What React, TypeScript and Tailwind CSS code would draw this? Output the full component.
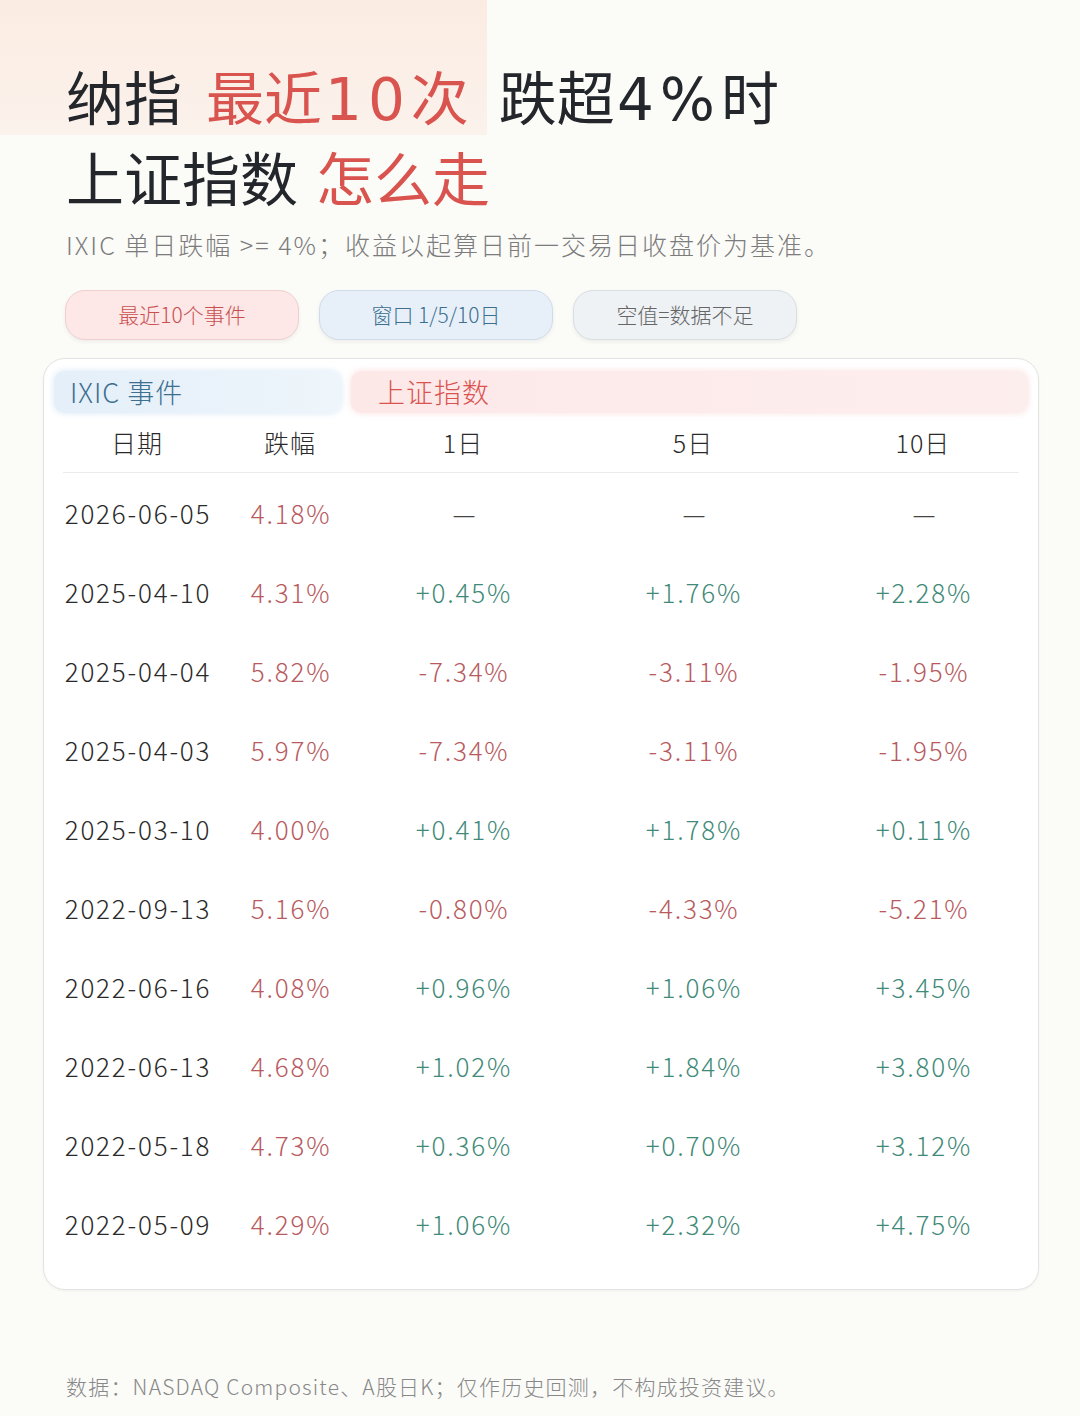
import React from "react";

type Row = { d: string; f: string; a: string; b: string; c: string };

const rows: Row[] = [
  { d: "2026-06-05", f: "4.18%", a: "—", b: "—", c: "—" },
  { d: "2025-04-10", f: "4.31%", a: "+0.45%", b: "+1.76%", c: "+2.28%" },
  { d: "2025-04-04", f: "5.82%", a: "-7.34%", b: "-3.11%", c: "-1.95%" },
  { d: "2025-04-03", f: "5.97%", a: "-7.34%", b: "-3.11%", c: "-1.95%" },
  { d: "2025-03-10", f: "4.00%", a: "+0.41%", b: "+1.78%", c: "+0.11%" },
  { d: "2022-09-13", f: "5.16%", a: "-0.80%", b: "-4.33%", c: "-5.21%" },
  { d: "2022-06-16", f: "4.08%", a: "+0.96%", b: "+1.06%", c: "+3.45%" },
  { d: "2022-06-13", f: "4.68%", a: "+1.02%", b: "+1.84%", c: "+3.80%" },
  { d: "2022-05-18", f: "4.73%", a: "+0.36%", b: "+0.70%", c: "+3.12%" },
  { d: "2022-05-09", f: "4.29%", a: "+1.06%", b: "+2.32%", c: "+4.75%" },
];

function Val({ v }: { v: string }) {
  if (v === "—") return <span className="text-[#444] tracking-normal">—</span>;
  if (v.startsWith("+")) return <span className="text-[#3f8a78]">{v}</span>;
  return <span className="text-[#b85a5e]">{v}</span>;
}

const font = { fontFamily: '"Noto Sans CJK SC", "Noto Sans", sans-serif' };
const latin = { fontFamily: '"DejaVu Sans", "Noto Sans CJK SC", sans-serif' };

export default function App() {
  return (
    <div className="relative w-[1080px] h-[1416px] overflow-hidden bg-[#fbfbf8]" style={font}>
      <div className="absolute left-0 top-0 w-[487px] h-[135px] bg-gradient-to-b from-[#fbece2] to-[#fbf2ec]" />
      <div className="relative pl-[66px] pt-[55px]">
        <div className="h-[81px] text-[58px] leading-[81px] text-[#23262b] font-normal whitespace-nowrap">
          纳指<span className="inline-block w-[24px]" />
          <span className="text-[#d9534f]">
            最近<span style={latin} className="leading-none tracking-[6px] pl-[3px]">10</span>次
          </span>
          <span className="inline-block w-[30px]" />
          跌超<span style={latin} className="leading-none tracking-[6px] pl-[2px]">4%</span>时
        </div>
        <div className="h-[81px] text-[58px] leading-[81px] text-[#23262b] font-normal whitespace-nowrap">
          上证指数<span className="inline-block w-[18px]" />
          <span className="text-[#d9534f]">怎么走</span>
        </div>
        <div className="mt-[11px] text-[25px] leading-[32px] tracking-[2px] text-[#7c7c7c] font-light whitespace-nowrap">
          IXIC 单日跌幅 &gt;= 4%；收益以起算日前一交易日收盘价为基准。
        </div>
      </div>

      <div className="relative flex gap-[20px] pl-[65px] mt-[30px]">
        <div className="w-[234px] h-[50px] rounded-[20px] bg-[#fde7e7] border border-[#efcfcf] shadow-[0_2px_4px_rgba(0,0,0,0.06)] flex items-center justify-center text-[21px] text-[#c9504f] font-light">
          最近10个事件
        </div>
        <div className="w-[234px] h-[50px] rounded-[20px] bg-[#e7f0f9] border border-[#d0dcea] shadow-[0_2px_4px_rgba(0,0,0,0.06)] flex items-center justify-center text-[21px] text-[#3d6f91] font-light">
          窗口 1/5/10日
        </div>
        <div className="w-[224px] h-[50px] rounded-[20px] bg-[#eef2f5] border border-[#d9dee3] shadow-[0_2px_4px_rgba(0,0,0,0.06)] flex items-center justify-center text-[21px] text-[#666] font-light">
          空值=数据不足
        </div>
      </div>

      <div className="relative ml-[43px] mt-[18px] w-[996px] h-[932px] rounded-[22px] bg-white border border-[#e4e4e4] shadow-[0_1px_3px_rgba(0,0,0,0.05)] pt-[12px]">
        <div className="flex gap-[10px] px-[10px] h-[42px]">
          <div className="w-[287px] h-full rounded-[10px] bg-gradient-to-r from-[#e4eff9] to-[#eef5fb] shadow-[0_0_6px_rgba(210,228,244,0.9)] flex items-center pl-[16px] text-[27px] tracking-[1px] text-[#3d6f91] font-light">
            IXIC 事件
          </div>
          <div className="flex-1 h-full rounded-[10px] bg-gradient-to-r from-[#fde8e8] to-[#fdeeee] shadow-[0_0_6px_rgba(250,220,220,0.9)] flex items-center pl-[27px] text-[27px] tracking-[1px] text-[#d9534f] font-light">
            上证指数
          </div>
        </div>
        <div className="mx-[19px] h-[60px] border-b border-[#ececec] grid grid-cols-[148px_158px_188px_272px_188px] items-center text-[25px] tracking-[1px] text-[#2a2a2a] font-light">
          <div className="text-center">日期</div>
          <div className="text-center">跌幅</div>
          <div className="text-center">1日</div>
          <div className="text-center">5日</div>
          <div className="text-center">10日</div>
        </div>
        <div className="ml-[20px]">
          {rows.map((r) => (
            <div key={r.d} className="h-[79px] grid grid-cols-[148px_158px_188px_272px_188px] items-center text-[26px] tracking-[1.8px] font-light">
              <div className="text-center text-[#2a2a2a]">{r.d}</div>
              <div className="text-center text-[#b85a5e]">{r.f}</div>
              <div className="text-center"><Val v={r.a} /></div>
              <div className="text-center"><Val v={r.b} /></div>
              <div className="text-center"><Val v={r.c} /></div>
            </div>
          ))}
        </div>
      </div>

      <div className="relative pl-[66px] mt-[82px] text-[21px] leading-[28px] tracking-[1.2px] text-[#888] font-light whitespace-nowrap">
        数据：NASDAQ Composite、A股日K；仅作历史回测，不构成投资建议。
      </div>
    </div>
  );
}
